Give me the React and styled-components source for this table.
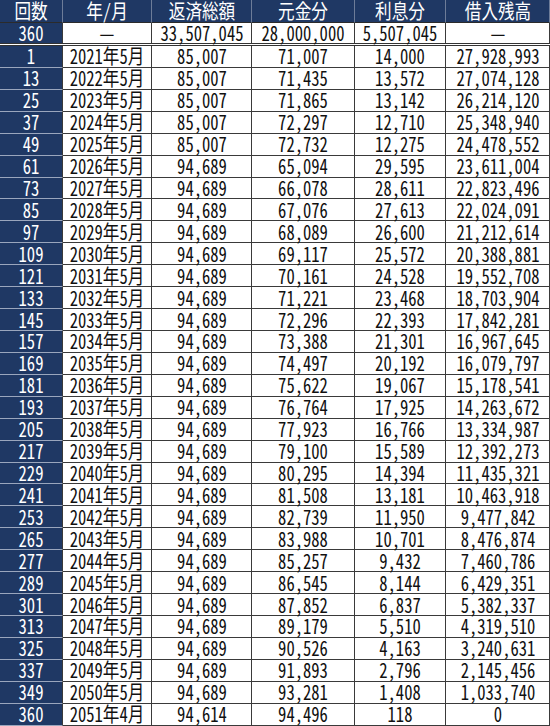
import React from 'react';
import styled, { createGlobalStyle, css } from 'styled-components';

const Global = createGlobalStyle`
  html, body { margin: 0; padding: 0; background: #fff; }
  body { width: 550px; height: 726px; overflow: hidden; }
`;

const NAVY = '#1f3864';

const Table = styled.div`
  width: 550px;
  display: flex;
  flex-direction: column;
  font-family: "Noto Sans CJK JP", "Noto Sans", sans-serif;
  font-feature-settings: "hwid";
  color: #111;
`;

const Row = styled.div`
  display: grid;
  grid-template-columns: 63px 89px 100px 103px 91px 104px;
  height: ${(p) => p.$h}px;
  box-sizing: border-box;
  ${(p) => p.$double && css`border-bottom: 3px double #333;`}
`;

const Cell = styled.div`
  box-sizing: border-box;
  display: flex;
  align-items: center;
  justify-content: center;
  min-width: 0;
  font-size: 20px;
  line-height: 1;
  border-right: 1px solid #3a3a3a;
  border-bottom: ${(p) => (p.$noBottom ? '0' : '1px solid #3a3a3a')};
  background: #fff;
  ${(p) =>
    p.$index &&
    css`
      background: ${NAVY};
      color: #fff;
      border-bottom-color: #9aa6bd;
    `}
  ${(p) =>
    p.$head &&
    css`
      background: ${NAVY};
      color: #fff;
      border-right-color: #6d7c98;
      border-bottom-color: #2b2b2b;
    `}
`;

const Txt = styled.span`
  display: inline-block;
  white-space: nowrap;
  line-height: 1;
  transform: scaleX(0.83);
`;

const header = ['回数', '年/月', '返済総額', '元金分', '利息分', '借入残高'];
const total = ['360', '—', '33,507,045', '28,000,000', '5,507,045', '—'];

const data = [
  ['1', '2021年5月', '85,007', '71,007', '14,000', '27,928,993'],
  ['13', '2022年5月', '85,007', '71,435', '13,572', '27,074,128'],
  ['25', '2023年5月', '85,007', '71,865', '13,142', '26,214,120'],
  ['37', '2024年5月', '85,007', '72,297', '12,710', '25,348,940'],
  ['49', '2025年5月', '85,007', '72,732', '12,275', '24,478,552'],
  ['61', '2026年5月', '94,689', '65,094', '29,595', '23,611,004'],
  ['73', '2027年5月', '94,689', '66,078', '28,611', '22,823,496'],
  ['85', '2028年5月', '94,689', '67,076', '27,613', '22,024,091'],
  ['97', '2029年5月', '94,689', '68,089', '26,600', '21,212,614'],
  ['109', '2030年5月', '94,689', '69,117', '25,572', '20,388,881'],
  ['121', '2031年5月', '94,689', '70,161', '24,528', '19,552,708'],
  ['133', '2032年5月', '94,689', '71,221', '23,468', '18,703,904'],
  ['145', '2033年5月', '94,689', '72,296', '22,393', '17,842,281'],
  ['157', '2034年5月', '94,689', '73,388', '21,301', '16,967,645'],
  ['169', '2035年5月', '94,689', '74,497', '20,192', '16,079,797'],
  ['181', '2036年5月', '94,689', '75,622', '19,067', '15,178,541'],
  ['193', '2037年5月', '94,689', '76,764', '17,925', '14,263,672'],
  ['205', '2038年5月', '94,689', '77,923', '16,766', '13,334,987'],
  ['217', '2039年5月', '94,689', '79,100', '15,589', '12,392,273'],
  ['229', '2040年5月', '94,689', '80,295', '14,394', '11,435,321'],
  ['241', '2041年5月', '94,689', '81,508', '13,181', '10,463,918'],
  ['253', '2042年5月', '94,689', '82,739', '11,950', '9,477,842'],
  ['265', '2043年5月', '94,689', '83,988', '10,701', '8,476,874'],
  ['277', '2044年5月', '94,689', '85,257', '9,432', '7,460,786'],
  ['289', '2045年5月', '94,689', '86,545', '8,144', '6,429,351'],
  ['301', '2046年5月', '94,689', '87,852', '6,837', '5,382,337'],
  ['313', '2047年5月', '94,689', '89,179', '5,510', '4,319,510'],
  ['325', '2048年5月', '94,689', '90,526', '4,163', '3,240,631'],
  ['337', '2049年5月', '94,689', '91,893', '2,796', '2,145,456'],
  ['349', '2050年5月', '94,689', '93,281', '1,408', '1,033,740'],
  ['360', '2051年4月', '94,614', '94,496', '118', '0'],
];

export default function App() {
  return (
    <>
      <Global />
      <Table>
        <Row $h={23}>
          {header.map((t, i) => (
            <Cell key={i} $head>
              <Txt>{t}</Txt>
            </Cell>
          ))}
        </Row>
        <Row $h={23} $double>
          {total.map((t, i) => (
            <Cell key={i} $index={i === 0} $noBottom>
              <Txt>{t}</Txt>
            </Cell>
          ))}
        </Row>
        {data.map((r, ri) => (
          <Row key={ri} $h={21.93}>
            {r.map((t, i) => (
              <Cell key={i} $index={i === 0}>
                <Txt>{t}</Txt>
              </Cell>
            ))}
          </Row>
        ))}
      </Table>
    </>
  );
}
